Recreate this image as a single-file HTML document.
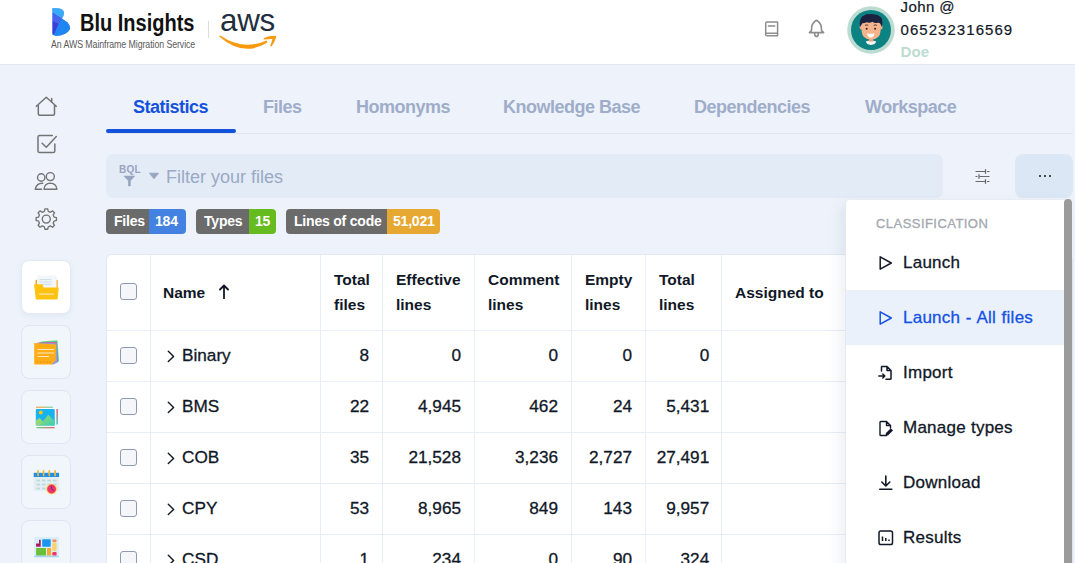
<!DOCTYPE html>
<html><head><meta charset="utf-8">
<style>
*{box-sizing:border-box;margin:0;padding:0}
html,body{width:1075px;height:563px;overflow:hidden}
body{font-family:"Liberation Sans",sans-serif;background:#eef3fb;position:relative;color:#111827}
.abs{position:absolute}
#hdr{position:absolute;left:0;top:0;width:1075px;height:65px;background:#fff;border-bottom:1px solid #e1e8f1}
.tab{position:absolute;top:97.3px;font-size:18px;font-weight:700;color:#9eadc9;white-space:nowrap;line-height:20px;letter-spacing:-0.5px}
.badge{position:absolute;top:209px;height:25px;border-radius:4px;overflow:hidden;display:flex;font-size:14px;font-weight:700;color:#fff;line-height:25px;letter-spacing:-0.2px}
.badge .l{background:#6b6b6b;padding-left:8px}
.badge .r{padding-left:6px}
#tbl{position:absolute;left:106px;top:254px;width:967px;height:320px;background:#fff;border:1px solid #e1e8f4;border-radius:6px 6px 0 0}
.vl{position:absolute;top:0;width:1px;height:320px;background:#e7eef8}
.hl{position:absolute;left:0;width:967px;height:1px;background:#e7eef8}
.th{position:absolute;font-size:15.5px;font-weight:700;color:#111827;line-height:25px;white-space:nowrap}
.td{position:absolute;font-size:17.2px;color:#111827;line-height:20px;white-space:nowrap;-webkit-text-stroke:0.3px #111827}
.cb{position:absolute;left:14px;width:17px;height:17px;border:1px solid #8e9ab3;border-radius:3px;background:#f4f6fa}
#dd{position:absolute;left:845px;top:199px;width:227px;height:380px;background:#fff;border-left:1px solid #e3e8f1;border-top:1px solid #e8edf5;border-radius:5px 0 0 0;box-shadow:-6px 4px 14px rgba(40,60,100,0.07)}
.mi{position:absolute;left:0;width:218px;height:55px;font-size:17px;color:#111827;line-height:20px}
.mi span{position:absolute;left:57px;top:18px;white-space:nowrap;letter-spacing:0.25px;-webkit-text-stroke-width:0.3px}
.mi svg{position:absolute;left:32px;top:20px}
</style></head><body>
<div id="hdr">
<svg class="abs" style="left:50px;top:6px" width="24" height="32" viewBox="0 0 24 32">
<path d="M2.5 2.2 L9 2.6 Q13.5 3.5 13.8 6.5 Q14 10 11.8 12.4 L17.5 16.5 Q20.3 19.5 20 22 Q19.5 25 15.5 27.5 Q10.5 30 6 29.7 Q3.5 29.5 2.5 28.5 Z" fill="#2f7cf0"/>
<path d="M2.5 2.2 L9 2.6 Q13.5 3.5 13.8 6.5 Q14 10 11.8 12.4 L2.5 6.5 Z" fill="#3aa9f7"/>
<path d="M2.5 6.5 L11.8 12.4 L8.6 17.8 L2.5 15 Z" fill="#4a62ea"/>
<path d="M2.5 15 L8.6 17.8 L4 28.8 L2.5 28.2 Z" fill="#3b3fd8"/>
<path d="M11.8 12.4 L17.5 16.5 Q20.3 19.5 20 22 Q19.5 25 15.5 27.5 Q10.5 30 6 29.7 Q4.5 29.6 3.8 29 Z" fill="#1f86f1"/>
</svg>
<div class="abs" style="left:80px;top:10px;font-size:23px;font-weight:700;color:#111;line-height:26px;white-space:nowrap;transform:scaleX(0.87);transform-origin:0 0">Blu Insights</div>
<div class="abs" style="left:50.5px;top:38px;font-size:11px;color:#5a5a5a;line-height:13px;white-space:nowrap;transform:scaleX(0.8);transform-origin:0 0;letter-spacing:-0.1px">An AWS Mainframe Migration Service</div>
<div class="abs" style="left:208px;top:21px;width:1px;height:17px;background:#dcdcdc"></div>
<div class="abs" style="left:220px;top:2px;font-size:32px;color:#232f3e;line-height:37px;white-space:nowrap;transform:scaleX(0.98);transform-origin:0 0;letter-spacing:-0.3px">aws</div>
<svg class="abs" style="left:218px;top:33.8px" width="60" height="16" viewBox="0 0 60 16">
<path d="M1.2 2.6 Q25 23.5 49.5 8.6 L48.6 6.4 Q25 17 2.2 1.4 Q1 1.3 1.2 2.6 Z" fill="#f79a0e"/>
<path d="M45.8 3.9 Q52 1.5 57 1.7 Q58.4 1.9 58.1 3.3 Q56.7 8.5 53.6 12.2 Q52.5 12.9 52.3 11.8 Q54 7.5 54.4 5 Q50 4.9 46.6 5.6 Q45 5.4 45.8 3.9 Z" fill="#f79a0e"/>
</svg>
<!-- book -->
<svg class="abs" style="left:763px;top:20px" width="17" height="18" viewBox="0 0 17 18">
<path d="M4 2.1 H14.6 V15.8 H4 Q2.7 15.8 2.7 14.5 V3.4 Q2.7 2.1 4 2.1 Z M2.7 13.2 H14.6 M5.4 5.9 H11.8" fill="none" stroke="#8d8d8d" stroke-width="1.5" stroke-linejoin="round" stroke-linecap="round"/>
</svg>
<!-- bell -->
<svg class="abs" style="left:807px;top:18px" width="19" height="21" viewBox="0 0 19 21">
<path d="M9.5 2.3 Q13.8 5 14.3 9 Q14.4 11.8 14.6 12.6 L16.6 14.6 H2.4 L4.4 12.6 Q4.6 11.8 4.7 9 Q5.2 5 9.5 2.3 Z M7.6 15 Q7.6 18.6 9.5 18.6 Q11.4 18.6 11.4 15" fill="none" stroke="#8d8d8d" stroke-width="1.6" stroke-linejoin="round" stroke-linecap="round"/>
</svg>
<!-- avatar -->
<svg class="abs" style="left:847px;top:6px" width="48" height="48" viewBox="0 0 48 48">
<circle cx="24" cy="24" r="23.8" fill="#bcdcd2"/>
<circle cx="24" cy="24" r="20" fill="#0d8282"/>
<path d="M18.8 35.5 Q24 33.5 29.2 35.5 Q28.5 38.5 24 39 Q19.5 38.5 18.8 35.5 Z" fill="#f4f4f4"/>
<rect x="21.8" y="31" width="4.5" height="4.5" fill="#eea07a"/>
<ellipse cx="14.4" cy="21" rx="1.8" ry="2.6" fill="#f5ad85"/>
<ellipse cx="33.8" cy="21" rx="1.8" ry="2.6" fill="#f5ad85"/>
<path d="M14.6 17 Q14.5 12 19 11.5 L29 11.5 Q33.5 12 33.6 17 L33.6 25 Q33 33.5 24.1 33.6 Q15.2 33.5 14.6 25 Z" fill="#f7b38b"/>
<path d="M13.4 21 Q12 16 13.6 13 Q14.5 10 17.5 9.2 Q19.5 7.6 22.5 8.3 Q25 7.4 27.5 8.5 Q30.5 8.2 32.5 10.3 Q35.5 11.8 35.2 15 Q35.8 18 34.8 21 L33.6 18 Q32.5 16.5 30.5 16.8 Q27.5 17.5 25.5 15.8 Q22.5 17.3 19.5 16.3 Q17 17.5 15.3 17.2 Q14.3 18.5 13.4 21 Z" fill="#1c2140"/>
<path d="M18 19.3 Q19.7 18.6 21.3 19.3 M26.7 19.3 Q28.3 18.6 30 19.3" stroke="#1c2140" stroke-width="0.8" fill="none"/>
<circle cx="19.7" cy="22.8" r="1" fill="#2e2323"/><circle cx="28.1" cy="22.7" r="1" fill="#2e2323"/>
<path d="M20 27.3 Q24 28.3 27.4 27.3 Q27.2 31.5 23.7 31.7 Q20.2 31.5 20 27.3 Z" fill="#fff"/>
</svg>
<div class="abs" style="left:900.5px;top:-3.8px;font-size:15px;color:#111827;line-height:22.8px;white-space:nowrap;letter-spacing:0.4px;-webkit-text-stroke-width:0.2px">John @<br><span style="letter-spacing:1.05px">065232316569</span></div>
<div class="abs" style="left:900.5px;top:42.5px;font-size:15px;font-weight:700;color:#bcdcd2;line-height:18px;letter-spacing:0.1px">Doe</div>

</div>

<!-- filter -->
<div class="abs" style="left:106px;top:154px;width:837px;height:44px;border-radius:7px;background:#e3ebf7"></div>
<div class="abs" style="left:166px;top:167px;font-size:18px;letter-spacing:0px;color:#9aa9c4;line-height:20px">Filter your files</div>
<div class="abs" style="left:1015px;top:154px;width:58px;height:44px;border-radius:8px;background:#dce7f6"></div>

<!-- sidebar icons -->
<svg class="abs" style="left:34px;top:95px" width="26" height="24" viewBox="0 0 26 24">
<path d="M2.3 11.2 L12.3 2.3 L22.3 11.2 M4.3 9.5 V18.8 Q4.3 20.3 5.8 20.3 H19 Q20.5 20.3 20.5 18.8 V9.5 M17.7 3.6 V7.2" fill="none" stroke="#737373" stroke-width="1.5" stroke-linecap="round" stroke-linejoin="round"/>
</svg>
<svg class="abs" style="left:34px;top:133px" width="26" height="23" viewBox="0 0 26 23">
<path d="M18.3 2.6 H5.6 Q4 2.6 4 4.2 V17.9 Q4 19.5 5.6 19.5 H19.2 Q20.8 19.5 20.8 17.9 V11 M8.1 10.2 L12.3 14.2 L22.3 3.6" fill="none" stroke="#737373" stroke-width="1.5" stroke-linecap="round" stroke-linejoin="round"/>
</svg>
<svg class="abs" style="left:33px;top:170px" width="26" height="22" viewBox="0 0 26 22">
<circle cx="8.2" cy="7.5" r="3.7" fill="none" stroke="#737373" stroke-width="1.4"/>
<circle cx="17.3" cy="6.6" r="4" fill="none" stroke="#737373" stroke-width="1.4"/>
<path d="M11 19.2 Q11.6 13.2 17.3 13.1 Q23.2 13.2 23.9 19.2 Z M9.7 13.3 Q3.8 13 2.2 19.2 H8.6" fill="none" stroke="#737373" stroke-width="1.4" stroke-linejoin="round" stroke-linecap="round"/>
</svg>
<svg class="abs" style="left:33px;top:206px" width="27" height="27" viewBox="0 0 27 27">
<path d="M11.6 2.5 L15 2.5 L15.8 5.6 L18.4 6.7 L21.1 5 L23.5 7.4 L21.9 10.1 L23 12.7 L26 13.5 L26 16.9 L23 17.7 L21.9 20.3 L23.5 23 L21.1 25.4 L18.4 23.8 L15.8 24.9 L15 28 L11.6 28 L10.8 24.9 L8.2 23.8 L5.5 25.4 L3.1 23 L4.7 20.3 L3.6 17.7 L0.6 16.9 L0.6 13.5 L3.6 12.7 L4.7 10.1 L3.1 7.4 L5.5 5 L8.2 6.7 L10.8 5.6 Z" transform="translate(13.3 13.1) scale(0.8) translate(-13.3 -15.25)" fill="none" stroke="#737373" stroke-width="1.7" stroke-linejoin="round"/>
<circle cx="13.3" cy="13.1" r="4" fill="none" stroke="#737373" stroke-width="1.4"/>
</svg>
<!-- tiles -->
<div class="abs" style="left:21px;top:260px;width:50px;height:54px;border-radius:8px;background:#fff;border:1px solid #e3e9f3;box-shadow:0 2px 6px rgba(80,100,140,0.08)"></div>
<div class="abs" style="left:21px;top:325px;width:50px;height:54px;border-radius:8px;background:#f1f5fc;border:1px solid #dfe6f2"></div>
<div class="abs" style="left:21px;top:390px;width:50px;height:54px;border-radius:8px;background:#f1f5fc;border:1px solid #dfe6f2"></div>
<div class="abs" style="left:21px;top:455px;width:50px;height:54px;border-radius:8px;background:#f1f5fc;border:1px solid #dfe6f2"></div>
<div class="abs" style="left:21px;top:520px;width:50px;height:54px;border-radius:8px;background:#f1f5fc;border:1px solid #dfe6f2"></div>
<!-- folder -->
<svg class="abs" style="left:33px;top:274px" width="27" height="27" viewBox="0 0 27 27">
<rect x="2.6" y="5.8" width="1.4" height="8" fill="#f5a21b"/>
<rect x="23.3" y="5.8" width="1.4" height="8" fill="#f5a21b"/>
<rect x="4.1" y="1.4" width="19.3" height="12.5" fill="#f3f6fa"/>
<path d="M6.5 5.6 H18.5 M6.5 8 H18.5 M9 10.4 H18.5" stroke="#c4dbe8" stroke-width="0.9"/>
<path d="M1.1 10.2 H9.5 L10.5 13.6 H25.7 L24.7 24.4 Q24.6 25.4 23.6 25.4 H3.8 Q2.8 25.4 2.7 24.4 Z" fill="#ffc20e"/>
<rect x="6.1" y="19.3" width="15" height="1.7" fill="#ffd98a"/>
</svg>
<!-- sticky -->
<svg class="abs" style="left:33px;top:339px" width="27" height="27" viewBox="0 0 27 27">
<path d="M8 2.6 L24.5 1.2 L26 22 L21 25 Z" fill="#7fdc6a"/>
<path d="M6 3.2 L24 2.2 L25.5 22.5 L20 25.3 Z" fill="#22c4c4"/>
<path d="M4 3.8 L23.5 3 L24.8 23 L19.5 25.5 Z" fill="#f05a8a"/>
<path d="M3 4.2 L23.5 4.2 L24.2 23.5 L19 25.5 Z" fill="#8b9ff0"/>
<path d="M1.2 4 L23.3 5.6 L22.6 21.3 L18.6 25.6 L1.2 25.5 Z" fill="#ffad16"/>
<path d="M4.5 10.5 H21 M4.5 14 H21 M4.5 17.5 H16" stroke="#ffe9c2" stroke-width="1.1"/>
<path d="M3.5 23.2 H18" stroke="#ef8a1a" stroke-width="1.2" stroke-dasharray="1.8 1.4"/>
</svg>
<!-- image -->
<svg class="abs" style="left:34px;top:405px" width="25" height="25" viewBox="0 0 25 25">
<defs>
<linearGradient id="gt" x1="0" x2="1"><stop offset="0" stop-color="#ffa34d"/><stop offset="1" stop-color="#7fd9b0"/></linearGradient>
<linearGradient id="gb" x1="0" x2="1"><stop offset="0" stop-color="#5fd68a"/><stop offset="1" stop-color="#f25a5a"/></linearGradient>
<linearGradient id="gr" x1="0" y1="0" x2="0" y2="1"><stop offset="0" stop-color="#f2605a"/><stop offset="1" stop-color="#2fd1c0"/></linearGradient>
<linearGradient id="gh" x1="0" y1="0" x2="1" y2="1"><stop offset="0" stop-color="#9ad86a"/><stop offset="1" stop-color="#3ccfb0"/></linearGradient>
</defs>
<rect x="2" y="1.6" width="17" height="1.3" fill="url(#gt)"/>
<rect x="22.4" y="4" width="1.5" height="15.5" fill="url(#gr)"/>
<rect x="2.5" y="22" width="18" height="1.3" fill="url(#gb)"/>
<rect x="0.8" y="3.1" width="21" height="18.3" rx="1" fill="#fbf8ff"/>
<rect x="1.8" y="4.1" width="18.9" height="16.3" rx="0.8" fill="#16b3f3"/>
<circle cx="6.8" cy="7.5" r="1.9" fill="#ffc20e"/>
<path d="M1.8 20.4 V15.5 L5.5 12.8 L10 17.5 L9 20.4 Z" fill="#8fd878"/>
<path d="M5.5 20.4 L14.3 9.6 L20.7 16.2 V20.4 Z" fill="url(#gh)"/>
</svg>
<!-- calendar -->
<svg class="abs" style="left:33px;top:469px" width="27" height="27" viewBox="0 0 27 27">
<rect x="0.7" y="8" width="25.4" height="13.7" fill="#e3edf2"/>
<rect x="0.7" y="3.8" width="25.4" height="4.2" fill="#1e90e8"/>
<path d="M5 1.8 V6.5 M10.6 1.8 V6.5 M16.3 1.8 V6.5 M22.1 1.8 V6.5" stroke="#f6b532" stroke-width="1.7" stroke-linecap="round"/>
<path d="M3.5 11.5 H7 M9 11.5 H12.5 M14.5 11.5 H18 M20 11.5 H23.5 M3.5 15.5 H7 M9 15.5 H12.5 M14.5 15.5 H18 M20 15.5 H23.5 M3.5 19.5 H7 M9 19.5 H12.5" stroke="#b5dada" stroke-width="1.4"/>
<circle cx="18.6" cy="20" r="5.3" fill="#ffcf4d"/>
<circle cx="18.6" cy="20" r="4.4" fill="#ee3468"/>
<path d="M18.6 16.8 V20 L20.8 21.5" stroke="#5b2a7a" stroke-width="0.9" fill="none"/>
</svg>

<!-- mosaic -->
<svg class="abs" style="left:33px;top:535px" width="27" height="25" viewBox="0 0 27 25">
<rect x="1.2" y="2" width="24.6" height="20.2" fill="#d9eefb"/>
<rect x="1.2" y="20.5" width="24.6" height="1.8" rx="0.8" fill="#a3d6f6"/>
<rect x="3.1" y="8.5" width="4.6" height="3.2" fill="#a8185e"/>
<rect x="6" y="4.8" width="1.7" height="4" fill="#a8185e"/>
<rect x="9.2" y="4.2" width="8.5" height="7.5" rx="0.6" fill="#1a96ee"/>
<rect x="19.3" y="4.5" width="4.3" height="2.5" rx="1" fill="#ff8a4a"/>
<rect x="19.3" y="7.5" width="4.3" height="8.5" rx="1.5" fill="#ffd36a"/>
<rect x="19.3" y="17" width="4.3" height="3.4" rx="1" fill="#f5365f"/>
<rect x="3.1" y="12.9" width="9.9" height="7.5" rx="0.6" fill="#6cbf3a"/>
<rect x="14" y="12.9" width="4" height="7.5" rx="0.5" fill="#ffa726"/>
</svg>

<!-- filter icons -->
<div class="abs" style="left:119px;top:163.5px;font-size:10px;font-weight:700;color:#97a5bf;line-height:11px;letter-spacing:0.2px">BQL</div>
<svg class="abs" style="left:122px;top:174.5px" width="15" height="13" viewBox="0 0 15 14">
<path d="M0.8 0.8 H13.8 L8.8 6.2 V11.8 L6 12 V6.2 Z" fill="#97a5bf"/>
</svg>
<svg class="abs" style="left:148px;top:172px" width="12" height="8" viewBox="0 0 12 8">
<path d="M1.4 1.2 H10.6 L6 6.8 Z" fill="#97a5bf" stroke="#97a5bf" stroke-width="0.8" stroke-linejoin="round"/>
</svg>
<!-- sliders -->
<svg class="abs" style="left:974px;top:168px" width="17" height="17" viewBox="0 0 17 17">
<path d="M1.5 3.5 H11 M13 3.5 H15.5 M1.5 8.5 H3.5 M5.5 8.5 H15.5 M1.5 13.5 H11 M13 13.5 H15.5" stroke="#6a6a6a" stroke-width="1.1"/>
<path d="M11.5 1.2 V5.8 M5 6.2 V10.8 M11.5 11.2 V15.8" stroke="#6a6a6a" stroke-width="1.3"/>
</svg>
<div class="abs" style="left:1039px;top:175px;width:2px;height:2px;background:#4a4a4a"></div>
<div class="abs" style="left:1044px;top:175px;width:2px;height:2px;background:#4a4a4a"></div>
<div class="abs" style="left:1049px;top:175px;width:2px;height:2px;background:#4a4a4a"></div>
<!-- tabs -->
<div class="tab" style="left:133px;color:#1452db">Statistics</div>
<div class="tab" style="left:263px">Files</div>
<div class="tab" style="left:356px">Homonyms</div>
<div class="tab" style="left:503px">Knowledge Base</div>
<div class="tab" style="left:694px">Dependencies</div>
<div class="tab" style="left:865px">Workspace</div>
<div class="abs" style="left:106px;top:133px;width:967px;height:1px;background:#dfe6f1"></div>
<div class="abs" style="left:106px;top:129px;width:130px;height:4px;border-radius:2px;background:#1452db"></div>

<!-- badges -->
<div class="badge" style="left:106px;width:80px"><div class="l" style="width:43px">Files</div><div class="r" style="background:#4382e0;flex:1">184</div></div>
<div class="badge" style="left:196px;width:80px"><div class="l" style="width:53px">Types</div><div class="r" style="background:#66bb1e;flex:1">15</div></div>
<div class="badge" style="left:286px;width:154px"><div class="l" style="width:101px">Lines of code</div><div class="r" style="background:#e7a832;flex:1">51,021</div></div>

<!-- table -->
<div id="tbl">
<div class="vl" style="left:43px"></div>
<div class="vl" style="left:213px"></div>
<div class="vl" style="left:275px"></div>
<div class="vl" style="left:367px"></div>
<div class="vl" style="left:464px"></div>
<div class="vl" style="left:538px"></div>
<div class="vl" style="left:614px"></div>
<div class="hl" style="top:75px"></div>
<div class="hl" style="top:126px"></div>
<div class="hl" style="top:177px"></div>
<div class="hl" style="top:228px"></div>
<div class="hl" style="top:279px"></div>
<div class="cb" style="left:13px;top:28px"></div>
<div class="th" style="left:56px;top:25px">Name</div>
<svg class="abs" style="left:112px;top:29px" width="10" height="15" viewBox="0 0 10 15"><path d="M5 14.5V1.5M1 5.5L5 1.5L9 5.5" fill="none" stroke="#111827" stroke-width="1.8" stroke-linecap="round" stroke-linejoin="round"/></svg>
<div class="th" style="left:227px;top:12px">Total<br>files</div>
<div class="th" style="left:289px;top:12px">Effective<br>lines</div>
<div class="th" style="left:381px;top:12px">Comment<br>lines</div>
<div class="th" style="left:478px;top:12px">Empty<br>lines</div>
<div class="th" style="left:552px;top:12px">Total<br>lines</div>
<div class="th" style="left:628px;top:25px">Assigned to</div>
<div class="cb" style="left:13px;top:92px"></div>
<svg class="abs" style="left:59px;top:95px" width="10" height="14" viewBox="0 0 10 14"><path d="M2.3 1.2L7.6 6.4L2.3 11.6" fill="none" stroke="#111827" stroke-width="1.4" stroke-linecap="round" stroke-linejoin="round"/></svg>
<div class="td" style="left:75px;top:90px">Binary</div>
<div class="td" style="right:703px;top:90px">8</div>
<div class="td" style="right:611px;top:90px">0</div>
<div class="td" style="right:514px;top:90px">0</div>
<div class="td" style="right:440px;top:90px">0</div>
<div class="td" style="right:362.8px;top:90px">0</div>
<div class="cb" style="left:13px;top:143px"></div>
<svg class="abs" style="left:59px;top:146px" width="10" height="14" viewBox="0 0 10 14"><path d="M2.3 1.2L7.6 6.4L2.3 11.6" fill="none" stroke="#111827" stroke-width="1.4" stroke-linecap="round" stroke-linejoin="round"/></svg>
<div class="td" style="left:75px;top:141px">BMS</div>
<div class="td" style="right:703px;top:141px">22</div>
<div class="td" style="right:611px;top:141px">4,945</div>
<div class="td" style="right:514px;top:141px">462</div>
<div class="td" style="right:440px;top:141px">24</div>
<div class="td" style="right:362.8px;top:141px">5,431</div>
<div class="cb" style="left:13px;top:194px"></div>
<svg class="abs" style="left:59px;top:197px" width="10" height="14" viewBox="0 0 10 14"><path d="M2.3 1.2L7.6 6.4L2.3 11.6" fill="none" stroke="#111827" stroke-width="1.4" stroke-linecap="round" stroke-linejoin="round"/></svg>
<div class="td" style="left:75px;top:192px">COB</div>
<div class="td" style="right:703px;top:192px">35</div>
<div class="td" style="right:611px;top:192px">21,528</div>
<div class="td" style="right:514px;top:192px">3,236</div>
<div class="td" style="right:440px;top:192px">2,727</div>
<div class="td" style="right:362.8px;top:192px">27,491</div>
<div class="cb" style="left:13px;top:245px"></div>
<svg class="abs" style="left:59px;top:248px" width="10" height="14" viewBox="0 0 10 14"><path d="M2.3 1.2L7.6 6.4L2.3 11.6" fill="none" stroke="#111827" stroke-width="1.4" stroke-linecap="round" stroke-linejoin="round"/></svg>
<div class="td" style="left:75px;top:243px">CPY</div>
<div class="td" style="right:703px;top:243px">53</div>
<div class="td" style="right:611px;top:243px">8,965</div>
<div class="td" style="right:514px;top:243px">849</div>
<div class="td" style="right:440px;top:243px">143</div>
<div class="td" style="right:362.8px;top:243px">9,957</div>
<div class="cb" style="left:13px;top:296px"></div>
<svg class="abs" style="left:59px;top:299px" width="10" height="14" viewBox="0 0 10 14"><path d="M2.3 1.2L7.6 6.4L2.3 11.6" fill="none" stroke="#111827" stroke-width="1.4" stroke-linecap="round" stroke-linejoin="round"/></svg>
<div class="td" style="left:75px;top:294px">CSD</div>
<div class="td" style="right:703px;top:294px">1</div>
<div class="td" style="right:611px;top:294px">234</div>
<div class="td" style="right:514px;top:294px">0</div>
<div class="td" style="right:440px;top:294px">90</div>
<div class="td" style="right:362.8px;top:294px">324</div>

</div>

<!-- dropdown -->
<div id="dd">
<div class="abs" style="left:30px;top:15.5px;font-size:13px;font-weight:400;color:#a3a8af;letter-spacing:0.45px;line-height:15px;-webkit-text-stroke:0.3px #a3a8af">CLASSIFICATION</div>
<div class="abs" style="left:0;top:90px;width:218px;height:55px;background:#ebf1fb"></div>
<div class="mi" style="top:35px"><svg width="14" height="16" viewBox="0 0 14 16"><path d="M2.2 1.8 L13.3 8 L2.2 14.2 Z" fill="none" stroke="#111827" stroke-width="1.5" stroke-linejoin="round"/></svg><span>Launch</span></div>
<div class="mi" style="top:90px;color:#1452e6"><svg width="14" height="16" viewBox="0 0 14 16"><path d="M2.2 1.8 L13.3 8 L2.2 14.2 Z" fill="none" stroke="#1452e6" stroke-width="1.5" stroke-linejoin="round"/></svg><span style="word-spacing:0.6px">Launch - All files</span></div>
<div class="mi" style="top:145px"><svg width="16" height="16" viewBox="0 0 16 16"><path d="M3.5 6 V2.2 Q3.5 1.5 4.3 1.5 H9 L13 5.5 V13.5 Q13 14.3 12.2 14.3 H8 M9 1.5 V5.5 H13 M0.8 11 H6.5 M4.8 9 L6.8 11 L4.8 13" fill="none" stroke="#111827" stroke-width="1.5" stroke-linejoin="round" stroke-linecap="round"/></svg><span>Import</span></div>
<div class="mi" style="top:200px"><svg width="16" height="17" viewBox="0 0 16 17"><path d="M8.5 15.5 H2.8 Q2 15.5 2 14.7 V2.3 Q2 1.5 2.8 1.5 H8.5 L12.5 5.5 V8 M8.5 1.5 V5.5 H12.5" fill="none" stroke="#111827" stroke-width="1.4" stroke-linejoin="round" stroke-linecap="round"/><path d="M7.5 15.8 L8 13 L12.8 8.2 L15 10.4 L10.2 15.2 Z" fill="#111827"/></svg><span>Manage types</span></div>
<div class="mi" style="top:255px"><svg width="16" height="16" viewBox="0 0 16 16"><path d="M7.8 1 V11 M3.8 7 L7.8 11 L11.8 7 M1.8 14.3 H13.8" fill="none" stroke="#111827" stroke-width="1.6" stroke-linejoin="round" stroke-linecap="round"/></svg><span>Download</span></div>
<div class="mi" style="top:310px"><svg width="16" height="16" viewBox="0 0 16 16"><rect x="1" y="1" width="13.5" height="13.5" rx="1.8" fill="none" stroke="#111827" stroke-width="1.5"/><path d="M4.5 11 V6.5 M7.8 11 V8 M11 11 V9.5" stroke="#111827" stroke-width="1.5"/></svg><span>Results</span></div>
<div class="abs" style="left:218px;top:-1px;width:8px;height:380px;border-radius:4px;background:#9b9b9b"></div>

</div>
</body></html>
